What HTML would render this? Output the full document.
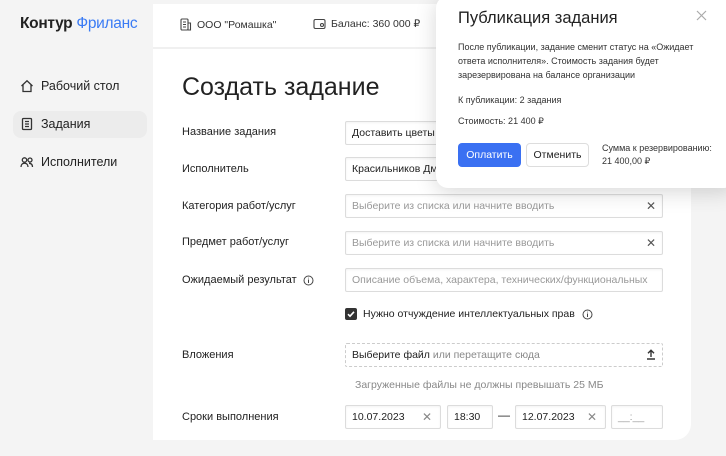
<!DOCTYPE html>
<html><head><meta charset="utf-8"><style>
*{box-sizing:border-box;margin:0;padding:0}
body{width:726px;height:456px;overflow:hidden;background:#f4f4f4;font-family:"Liberation Sans","Noto Sans CJK SC",sans-serif;color:#222;position:relative}
.abs{position:absolute}
.card{left:153px;top:4px;width:538px;height:436px;background:#fff;border-radius:0 0 16px 0}
.hdr{left:153px;top:4px;width:538px;height:45px;border-bottom:2px solid #f0f0f0}
.logo{left:20px;top:15px;font-size:15.5px;font-weight:bold;letter-spacing:-0.3px}
.logo span{color:#3a7bf4;font-weight:normal}
.nav{left:20px;font-size:12.5px;color:#222;display:flex;align-items:center;gap:7px}
.sel{left:13px;top:111px;width:134px;height:27px;background:#ececec;border-radius:8px}
h1{position:absolute;left:182px;top:73px;font-size:25px;font-weight:normal;color:#222}
.lbl{left:182px;font-size:11px;color:#222}
.inp{left:345px;width:318px;height:24px;border:1px solid #dcdcdc;border-radius:2px;font-size:10.5px;padding:5px 6px;color:#222;white-space:nowrap;overflow:hidden;box-shadow:inset 0 1px 2px rgba(0,0,0,.05)}
.ph{color:#999}
.x{position:absolute;right:6px;top:4px;font-size:12px;color:#555}
.modal{left:436px;top:-4px;width:300px;height:192px;background:#fff;border-radius:12px;box-shadow:0 4px 22px rgba(0,0,0,.16)}
.t{font-size:9px;color:#333;line-height:14px}
svg{display:block}
</style></head><body>
<div class="abs logo">Контур <span>Фриланс</span></div>
<div class="abs sel"></div>
<div class="abs nav" style="top:79px"><svg width="14" height="14" viewBox="0 0 14 14" fill="none" stroke="#333" stroke-width="1.3"><path d="M1.5 7L7 1.8 12.5 7M3 5.8V12.5h8V5.8"/></svg>Рабочий стол</div>
<div class="abs nav" style="top:117px"><svg width="14" height="14" viewBox="0 0 14 14" fill="none" stroke="#333" stroke-width="1.3"><rect x="2.5" y="1.5" width="9" height="11" rx="1"/><path d="M5 4.5h4M5 7h4M5 9.5h4"/></svg>Задания</div>
<div class="abs nav" style="top:155px"><svg width="14" height="14" viewBox="0 0 14 14" fill="none" stroke="#333" stroke-width="1.3"><circle cx="4.5" cy="5" r="2.2"/><circle cx="10" cy="5" r="2"/><path d="M1 12c0-2.5 1.5-3.8 3.5-3.8S8 9.5 8 12M9 8.3c2 0 3.5 1.2 3.5 3.7"/></svg>Исполнители</div>
<div class="abs card"></div>
<div class="abs hdr"></div>
<div class="abs" style="left:180px;top:18px;font-size:10.5px;color:#333;display:flex;gap:5px;align-items:center"><svg width="12" height="13" viewBox="0 0 12 13" fill="none" stroke="#444" stroke-width="1.1"><rect x="1" y="1" width="7" height="11" rx="1"/><path d="M8 5h2.5v7H8M3 4h3M3 6.5h3M3 9h3"/></svg>ООО "Ромашка"</div>
<div class="abs" style="left:313px;top:18px;font-size:10.5px;color:#333;display:flex;gap:5px;align-items:center"><svg width="13" height="12" viewBox="0 0 13 12" fill="none" stroke="#444" stroke-width="1.1"><rect x="1" y="1.5" width="11" height="9" rx="1.5"/><circle cx="9" cy="7" r="1.5"/></svg>Баланс: 360 000 ₽</div>
<h1>Создать задание</h1>
<div class="abs lbl" style="top:126px">Название задания</div>
<div class="abs lbl" style="top:163px">Исполнитель</div>
<div class="abs lbl" style="top:200px">Категория работ/услуг</div>
<div class="abs lbl" style="top:236px">Предмет работ/услуг</div>
<div class="abs lbl" style="top:274px;display:flex;gap:6px;align-items:center">Ожидаемый результат <svg width="11" height="11" viewBox="0 0 11 11" fill="none" stroke="#444"><circle cx="5.5" cy="5.5" r="4.5"/><path d="M5.5 4.5v3.5M5.5 2.8v.6"/></svg></div>
<div class="abs lbl" style="top:349px">Вложения</div>
<div class="abs lbl" style="top:411px">Сроки выполнения</div>
<div class="abs inp" style="top:121px">Доставить цветы</div>
<div class="abs inp" style="top:157px">Красильников Дмитрий</div>
<div class="abs inp" style="top:194px"><span class="ph">Выберите из списка или начните вводить</span><span class="x">✕</span></div>
<div class="abs inp" style="top:231px"><span class="ph">Выберите из списка или начните вводить</span><span class="x">✕</span></div>
<div class="abs inp" style="top:268px"><span class="ph">Описание объема, характера, технических/функциональных</span></div>
<div class="abs" style="left:345px;top:308px;width:12px;height:12px;background:#333;border-radius:2px"><svg width="12" height="12" viewBox="0 0 12 12" fill="none" stroke="#fff" stroke-width="1.6"><path d="M3 6.2l2 2 4-4.4"/></svg></div>
<div class="abs" style="left:363px;top:308px;font-size:10.5px;display:flex;gap:7px;align-items:center">Нужно отчуждение интеллектуальных прав <svg width="11" height="11" viewBox="0 0 11 11" fill="none" stroke="#444"><circle cx="5.5" cy="5.5" r="4.5"/><path d="M5.5 4.5v3.5M5.5 2.8v.6"/></svg></div>
<div class="abs inp" style="top:343px;border:1px dashed #ccc;box-shadow:none">Выберите файл <span style="color:#888">или перетащите сюда</span><span class="x" style="top:5px"><svg width="10" height="11" viewBox="0 0 10 11" fill="none" stroke="#333" stroke-width="1.4"><path d="M5 8V1.5M2 4.3L5 1.3 8 4.3M1 10h8"/></svg></span></div>
<div class="abs" style="left:355px;top:379px;font-size:10.5px;color:#888">Загруженные файлы не должны превышать 25 МБ</div>
<div class="abs inp" style="top:405px;width:96px">10.07.2023<span class="x" style="right:8px;color:#888">✕</span></div>
<div class="abs inp" style="top:405px;left:447px;width:46px">18:30</div>
<div class="abs" style="left:498px;top:408px;font-size:12px">—</div>
<div class="abs inp" style="top:405px;left:515px;width:91px">12.07.2023<span class="x" style="right:8px;color:#888">✕</span></div>
<div class="abs inp" style="top:405px;left:611px;width:52px"><span class="ph">__:__</span></div>
<div class="abs modal">
<div class="abs" style="left:22px;top:13px;font-size:16.5px;color:#222">Публикация задания</div>
<div class="abs" style="left:260px;top:14px"><svg width="11" height="11" viewBox="0 0 11 11" stroke="#aaa" stroke-width="1.2"><path d="M1 1l9 9M10 1l-9 9"/></svg></div>
<div class="abs t" style="left:22px;top:44px;width:252px">После публикации, задание сменит статус на «Ожидает ответа исполнителя». Стоимость задания будет зарезервирована на балансе организации</div>
<div class="abs t" style="left:22px;top:97px">К публикации: 2 задания</div>
<div class="abs t" style="left:22px;top:118px">Стоимость: 21 400 ₽</div>
<div class="abs" style="left:22px;top:147px;width:63px;height:24px;background:#3a70f2;border-radius:4px;color:#fff;font-size:10.5px;text-align:center;line-height:24px">Оплатить</div>
<div class="abs" style="left:90px;top:147px;width:63px;height:24px;border:1px solid #ddd;border-radius:4px;font-size:10.5px;text-align:center;line-height:22px">Отменить</div>
<div class="abs t" style="left:166px;top:146px;line-height:13px">Сумма к резервированию:<br>21 400,00 ₽</div>
</div>
</body></html>
